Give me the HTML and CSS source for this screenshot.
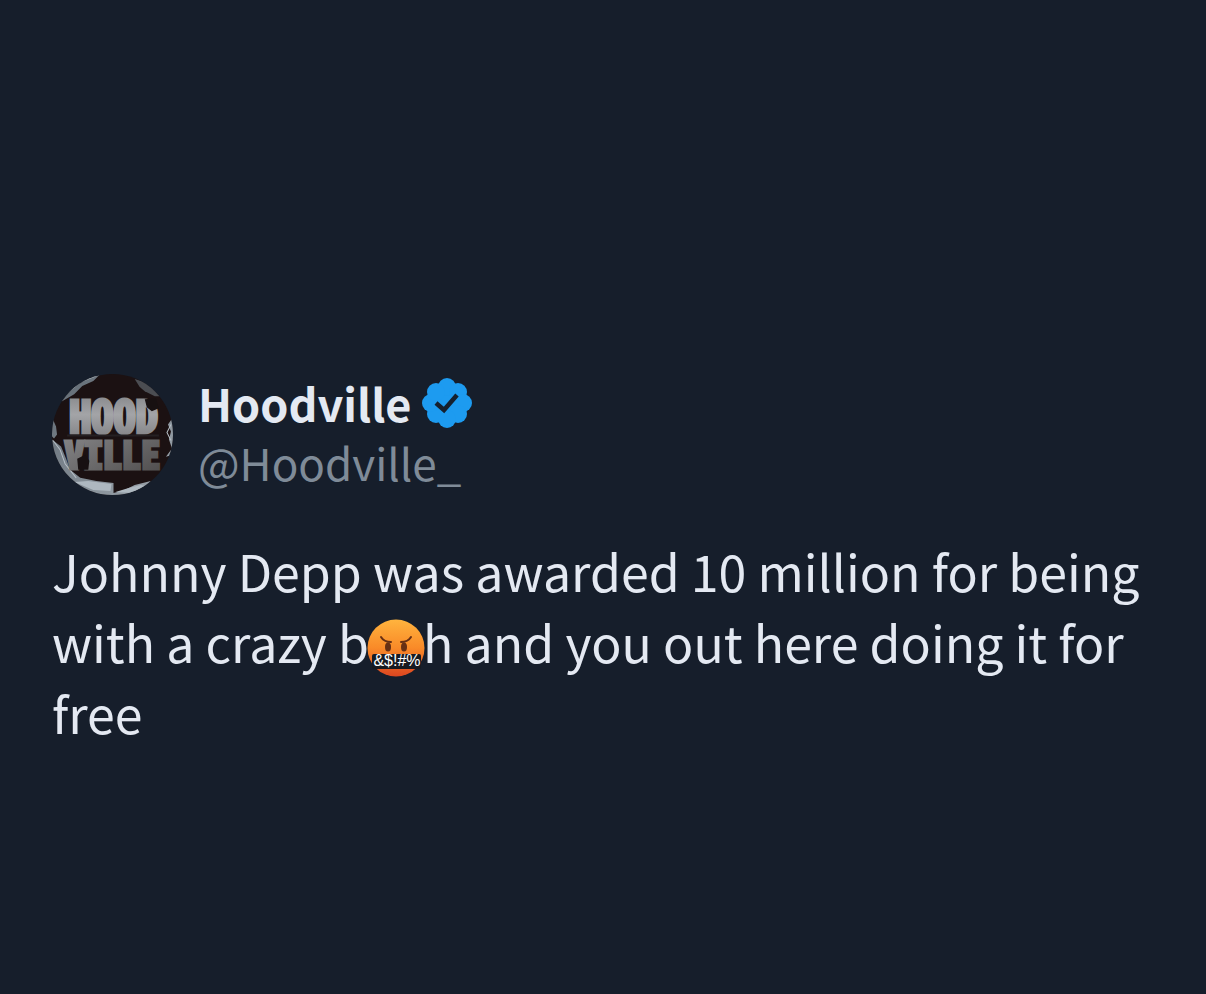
FILE: index.html
```html
<!DOCTYPE html>
<html lang="en">
<head>
<meta charset="utf-8">
<meta name="viewport" content="width=device-width, initial-scale=1">
<title>Hoodville on X</title>
<link rel="stylesheet" href="styles.css">
</head>
<body>
<main class="page">
  <article class="post">
    <header class="author">
      <svg class="avatar" viewBox="0 0 120 120" role="img" aria-label="Hoodville avatar">
        <defs>
          <clipPath id="disc"><circle cx="60" cy="60" r="60"/></clipPath>
          <linearGradient id="metal" x1="0" y1="0" x2="0" y2="1">
            <stop offset="0" stop-color="#77787b"/><stop offset=".5" stop-color="#a3a4a7"/><stop offset="1" stop-color="#77777a"/>
          </linearGradient>
          <linearGradient id="steel" x1="0" y1="0" x2="1" y2="1">
            <stop offset="0" stop-color="#8b8b8d"/><stop offset="1" stop-color="#4c4a4a"/>
          </linearGradient>
          <linearGradient id="paper" x1="0" y1="0" x2="1" y2="1">
            <stop offset="0" stop-color="#5e6871"/><stop offset="1" stop-color="#a0a9b1"/>
          </linearGradient>
        </defs>
        <g clip-path="url(#disc)">
          <path fill="#1b1112" d="M0 0h120v120H0z"/>
          <path fill="url(#paper)" d="M8 26 28 7 48 0 41 7 30 12 22 20 10 27zM0 43 4 52 5 60 2 64 0 62zM0 65 9 72 14 84 18 95 28 103 44 106 61 108 61 118 72 115 82 110 98 106 88 118 60 122 20 114 0 90zM120 43 115 50 118 57 116 65 119 74 113 82 120 80z"/>
          <path fill="#4b4d52" d="M82 5 98 10 107 22 102 22 92 17 87 13z"/>
          <path fill="#aeb8c0" d="M22 107 36 106 59 109 58 116 41 115zM63 117 76 113 88 110 94 111 80 118z"/>
          <path fill="none" stroke="#b5bec5" stroke-width="1" d="M9 24 28 8 46 1M1 66 8 75 13 89 24 103M118 50 114 58 118 66"/>
          <text class="logo logo-top" x="61" y="59">HOOD</text>
          <text class="logo logo-bottom" x="60" y="94">VILLE</text>
          <path fill="#171011" d="M92 25 103 24 106 34 99 37 94 33zM25 84 33 80 37 86 36 95 26 95z"/>
          <path fill="none" stroke="#252022" stroke-width="2" d="M15 61h91"/>
        </g>
      </svg>
      <div class="names">
        <div class="name-row">
          <span class="name">Hoodville</span>
          <svg class="badge" viewBox="0 0 50 50" role="img" aria-label="Verified account">
            <g fill="#1d9bf0">
              <circle cx="25" cy="25" r="20"/>
              <circle cx="25" cy="9" r="9"/><circle cx="36" cy="14" r="9"/><circle cx="41" cy="25" r="9"/><circle cx="36" cy="36" r="9"/>
              <circle cx="25" cy="41" r="9"/><circle cx="14" cy="36" r="9"/><circle cx="9" cy="25" r="9"/><circle cx="14" cy="14" r="9"/>
            </g>
            <path d="M14 25 22 32 35 17" fill="none" stroke="#15202e" stroke-width="4.5"/>
          </svg>
        </div>
        <a class="handle" href="#">@Hoodville_</a>
      </div>
    </header>
    <p class="text">Johnny Depp was awarded 10 million for being with a crazy b<svg class="emoji" viewBox="0 0 58 58" role="img" aria-label="Face with symbols on mouth">
      <defs>
        <linearGradient id="face" x1="0" y1="0" x2="0" y2="1">
          <stop offset="0" stop-color="#ffb43e"/><stop offset=".5" stop-color="#f98a28"/><stop offset="1" stop-color="#dc4620"/>
        </linearGradient>
      </defs>
      <circle cx="29" cy="29" r="28.5" fill="url(#face)"/>
      <ellipse cx="21" cy="28" rx="3" ry="4.5" fill="#673014"/><ellipse cx="37" cy="28" rx="3" ry="4.5" fill="#673014"/>
      <path d="M14 18q3 5 10 5M44 18q-3 5-10 5" fill="none" stroke="#673014" stroke-width="2" stroke-linecap="round"/>
      <rect x="5" y="35" width="49" height="15" rx="2" fill="#171a20"/>
      <text class="symbols" x="30" y="47">&amp;$!#%</text>
    </svg>h and you out here doing it for free</p>
  </article>
</main>
</body>
</html>
```
FILE: styles.css
```css
body {
  margin: 0;
  background: #161e2b;
  color: #e4e9f2;
  font-family: "Noto Sans CJK SC", "Open Sans", sans-serif;
}

.page {
  padding: 374px 52px 40px;
}

.author {
  display: flex;
  align-items: flex-start;
  gap: 25px;
}

.avatar {
  flex: none;
  width: 121px;
  height: 121px;
}

.logo {
  font-family: "Noto Sans Mono CJK SC", "Liberation Mono", monospace;
  font-weight: 700;
  text-anchor: middle;
  stroke-width: 3px;
}

.logo-top {
  font-size: 44px;
  fill: url(#metal);
  stroke: url(#metal);
}

.logo-bottom {
  font-size: 38px;
  fill: url(#steel);
  stroke: url(#steel);
}

.name-row {
  display: flex;
  align-items: center;
  gap: 11px;
}

.name {
  font-size: 45px;
  font-weight: 700;
  line-height: 58px;
}

.handle {
  display: block;
  color: #7f8b98;
  font-size: 44px;
  line-height: 60px;
  text-decoration: none;
}

.badge {
  width: 50px;
  height: 50px;
}

.text {
  margin: 40px 0 0;
  font-size: 50px;
  line-height: 71px;
}

.emoji {
  width: 58px;
  height: 58px;
  margin: 0 -2px;
  vertical-align: -14px;
}

.symbols {
  font: 400 16px "Liberation Sans", sans-serif;
  fill: #fff;
  text-anchor: middle;
}
```
